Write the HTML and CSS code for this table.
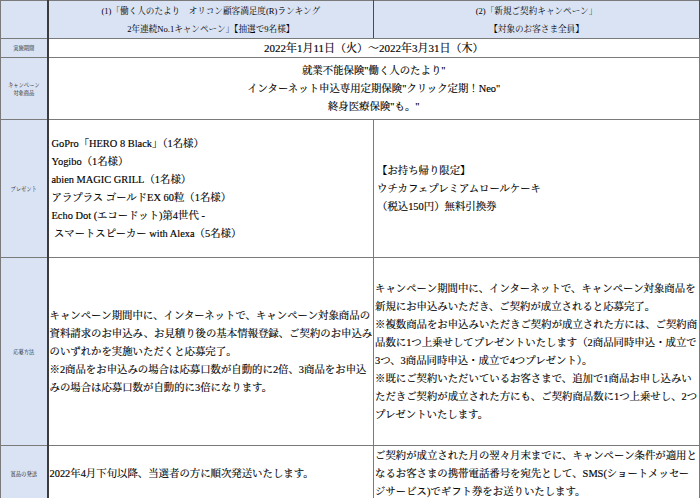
FILE: index.html
```html
<!DOCTYPE html>
<html lang="ja">
<head>
<meta charset="utf-8">
<title>キャンペーン概要</title>
<link rel="stylesheet" href="styles.css">
</head>
<body>
<table class="campaign">
  <colgroup>
    <col class="col-label">
    <col class="col-main">
    <col class="col-main">
  </colgroup>
  <tr class="row-head">
    <td class="label"></td>
    <td class="head">(1)「働く人のたより　オリコン顧客満足度(R)ランキング<br>2年連続No.1キャンペーン」【抽選で9名様】</td>
    <td class="head">(2)「新規ご契約キャンペーン」<br>【対象のお客さま全員】</td>
  </tr>
  <tr class="row-date">
    <td class="label">実施期間</td>
    <td class="text center date" colspan="2">2022年1月11日（火）～2022年3月31日（木）</td>
  </tr>
  <tr class="row-goods">
    <td class="label">キャンペーン<br>対象商品</td>
    <td class="text center" colspan="2">就業不能保険"働く人のたより"<br>インターネット申込専用定期保険"クリック定期！Neo"<br>終身医療保険"も。"</td>
  </tr>
  <tr class="row-present">
    <td class="label">プレゼント</td>
    <td class="text pad">GoPro「HERO 8 Black」（1名様）<br>Yogibo（1名様）<br>abien MAGIC GRILL（1名様）<br>アラプラス ゴールドEX 60粒（1名様）<br>Echo Dot (エコードット)第4世代 -<br>&nbsp;スマートスピーカー with Alexa（5名様）</td>
    <td class="text pad">【お持ち帰り限定】<br>ウチカフェプレミアムロールケーキ<br>（税込150円）無料引換券</td>
  </tr>
  <tr class="row-apply">
    <td class="label">応募方法</td>
    <td class="text">キャンペーン期間中に、インターネットで、キャンペーン対象商品の<br>資料請求のお申込み、お見積り後の基本情報登録、ご契約のお申込み<br>のいずれかを実施いただくと応募完了。<br>※2商品をお申込みの場合は応募口数が自動的に2倍、3商品をお申込<br>みの場合は応募口数が自動的に3倍になります。</td>
    <td class="text">キャンペーン期間中に、インターネットで、キャンペーン対象商品を<br>新規にお申込みいただき、ご契約が成立されると応募完了。<br>※複数商品をお申込みいただきご契約が成立された方には、ご契約商<br>品数に1つ上乗せしてプレゼントいたします（2商品同時申込・成立で<br>3つ、3商品同時申込・成立で4つプレゼント）。<br>※既にご契約いただいているお客さまで、追加で1商品お申し込みい<br>ただきご契約が成立された方にも、ご契約商品数に1つ上乗せし、2つ<br>プレゼントいたします。</td>
  </tr>
  <tr class="row-ship">
    <td class="label">賞品の発送</td>
    <td class="text">2022年4月下旬以降、当選者の方に順次発送いたします。</td>
    <td class="text">ご契約が成立された月の翌々月末までに、キャンペーン条件が適用と<br>なるお客さまの携帯電話番号を宛先として、SMS(ショートメッセー<br>ジサービス)でギフト券をお送りいたします。</td>
  </tr>
</table>
</body>
</html>
```

FILE: styles.css
```css
html, body {
  margin: 0;
  padding: 0;
  background: #ffffff;
}

.campaign {
  border-collapse: collapse;
  table-layout: fixed;
  width: 699px;
  font-family: "Liberation Serif", "Noto Serif CJK JP", "Noto Sans CJK JP", serif;
  color: #000000;
  border: 1px solid #444444;
}

.col-label { width: 47px; }
.col-main { width: 326px; }

.campaign td {
  border: 1px solid #7a7a7a;
  padding: 0 1px;
  vertical-align: middle;
  overflow: hidden;
  white-space: nowrap;
}

.campaign td.label {
  background: #dae3f3;
  font-size: 5.3px;
  line-height: 8px;
  text-align: center;
  border-right: 2px solid #3c3c3c;
  color: #222222;
}

.campaign td.head {
  background: #dae3f3;
  font-size: 8.6px;
  line-height: 18px;
  text-align: center;
  border-right: 1px solid #4a4a4a;
}

.text {
  font-size: 10.4px;
  line-height: 18px;
  -webkit-text-stroke: 0.15px #000000;
}

.center { text-align: center; }

.date { font-size: 11px; }

.campaign td.pad { padding-left: 3px; }

.row-head td { height: 37px; }
.row-date td { height: 16px; }
.row-goods td { height: 61px; }
.row-present td { height: 137px; }
.row-apply td { height: 187px; }
.row-ship td { height: 56px; }
```
